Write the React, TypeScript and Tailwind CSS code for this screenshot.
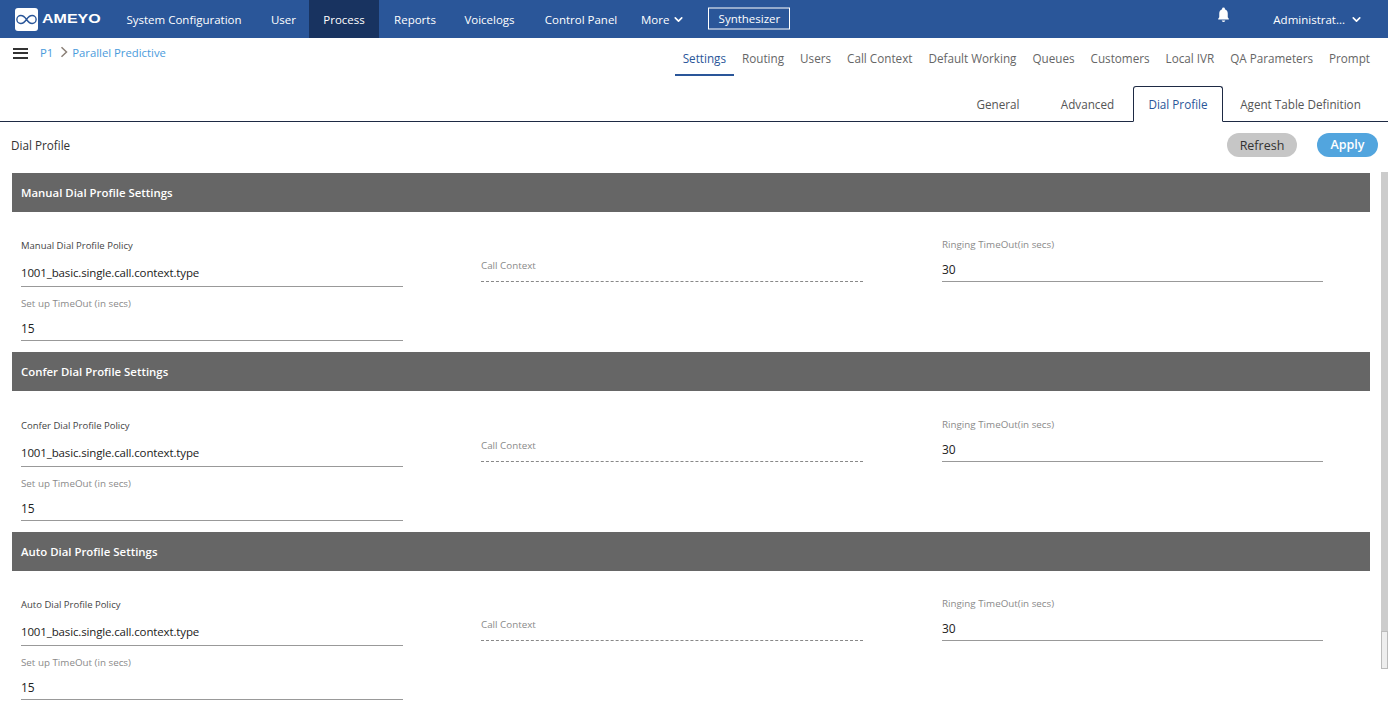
import { ChevronDown } from "lucide-react";

const mainNav = [
  { label: "System Configuration", w: "w-[148px]" },
  { label: "User", w: "w-[51px]" },
  { label: "Process", w: "w-[70px]", active: true },
  { label: "Reports", w: "w-[72px]" },
  { label: "Voicelogs", w: "w-[77px]" },
  { label: "Control Panel", w: "w-[106px]" },
];

const subNav = ["Settings", "Routing", "Users", "Call Context", "Default Working", "Queues", "Customers", "Local IVR", "QA Parameters", "Prompt"];

const sections = [
  { title: "Manual Dial Profile Settings", policy: "Manual Dial Profile Policy", top: "pt-[27px]" },
  { title: "Confer Dial Profile Settings", policy: "Confer Dial Profile Policy", top: "pt-[28px]" },
  { title: "Auto Dial Profile Settings", policy: "Auto Dial Profile Policy", top: "pt-[27px]" },
];

function Logo() {
  return (
    <div className="flex items-center gap-[4px]">
      <div className="flex h-[23px] w-[23px] items-center justify-center rounded-[3px] bg-white">
        <svg viewBox="0 0 24 12" className="h-[11px] w-[21px]" fill="none" stroke="#2a5699" strokeWidth="1.6">
          <path d="M12 6C10 3 8 1.5 5.5 1.5a4.5 4.5 0 0 0 0 9C8 10.5 10 9 12 6c2-3 4-4.5 6.5-4.5a4.5 4.5 0 0 1 0 9C16 10.5 14 9 12 6z" />
        </svg>
      </div>
      <span className="origin-left scale-x-[1.28] text-[12.5px] font-bold text-white [font-family:'Liberation_Sans',sans-serif]">AMEYO</span>
    </div>
  );
}

function Section({ title, policy, top }: { title: string; policy: string; top: string }) {
  return (
    <section className="pb-[11px]">
      <div className="flex h-[39px] w-[1358px] items-center bg-[#666] pl-[9px] pt-[1px] text-[11.4px] font-semibold text-white">{title}</div>
      <div className={`flex pl-[9px] ${top}`}>
        <div className="w-[460px]">
          <div className="text-[9.5px] leading-[14px] text-[#444]">{policy}</div>
          <div className="mt-[8px] h-[26px] w-[382px] border-b border-[#999] text-[11.5px] leading-[24px] tracking-[-0.14px] text-[#222]">
            1001_basic.single.call.context.type
          </div>
          <div className="mt-[10px] text-[9.8px] leading-[14px] text-[#8a8a8a]">Set up TimeOut (in secs)</div>
          <div className="mt-[8px] h-[22px] w-[382px] border-b border-[#999] text-[12px] leading-[20px] text-[#222]">15</div>
        </div>
        <div className="w-[461px] pt-[20px]">
          <div className="text-[9.8px] leading-[14px] text-[#8a8a8a]">Call Context</div>
          <div className="mt-[8px] w-[382px] border-b border-dashed border-[#888]" />
        </div>
        <div className="-mt-[1px]">
          <div className="text-[9.8px] leading-[14px] text-[#8a8a8a]">Ringing TimeOut(in secs)</div>
          <div className="mt-[8px] h-[22px] w-[381px] border-b border-[#999] text-[12px] leading-[20px] text-[#222]">30</div>
        </div>
      </div>
    </section>
  );
}

export default function App() {
  return (
    <div className="h-[710px] w-[1388px] overflow-hidden bg-white [font-family:'Open_Sans',sans-serif]">
      <header className="flex h-[38px] items-center bg-[#2a5699] pl-[15px] pr-[25px] text-[11.5px] text-white">
        <div className="w-[95px]">
          <Logo />
        </div>
        <nav className="flex h-full">
          {mainNav.map((item) => (
            <div key={item.label} className={`flex items-center justify-center pt-[1px] ${item.w} ${item.active ? "bg-[#183360]" : ""}`}>
              {item.label}
            </div>
          ))}
        </nav>
        <div className="ml-[7px] flex items-center gap-[3px] pt-[1px]">
          More <ChevronDown size={13} strokeWidth={3} />
        </div>
        <div className="ml-[23px] flex h-[22px] w-[82px] -translate-y-[0.5px] items-center justify-center border border-white">Synthesizer</div>
        <svg viewBox="0 0 24 24" className="ml-auto h-[17px] w-[17px] -translate-y-[5px]" fill="white">
          <path d="M12 2a2 2 0 0 0-2 2v.6C7.5 5.5 6 7.8 6 10.5V16l-1.5 2v1h15v-1L18 16v-5.5c0-2.7-1.5-5-4-5.9V4a2 2 0 0 0-2-2z" />
          <path d="M9.5 20.5h5a2.5 2 0 0 1-5 0z" />
        </svg>
        <div className="ml-[41px] flex items-center gap-[5px] pt-[1px]">
          Administrat... <ChevronDown size={13} strokeWidth={3} />
        </div>
      </header>

      <div className="h-[84px] border-b border-[#1e2a44]">
        <div className="flex items-start justify-between">
          <div className="flex items-center pl-[13px] pt-[7px] text-[11.3px] text-[#4a9bdc]">
            <div className="flex w-[15px] flex-col gap-[2.5px]">
              <span className="h-[2px] bg-[#333]" />
              <span className="h-[2px] bg-[#333]" />
              <span className="h-[2px] bg-[#333]" />
            </div>
            <span className="ml-[12px]">P1</span>
            <svg viewBox="0 0 8 12" className="ml-[7px] mr-[4px] h-[12px] w-[8px] -translate-y-[1px]" fill="none" stroke="#8a7f76" strokeWidth="1.5">
              <path d="M1.5 1.2 6.5 6l-5 4.8" />
            </svg>
            <span>Parallel Predictive</span>
          </div>
          <nav className="mr-[10px] flex h-[38px] text-[11.7px] text-[#666]">
            {subNav.map((item, i) => (
              <div key={item} className={`flex h-full items-center px-[8px] ${i === 0 ? "border-b-[2px] border-[#2a5699] pt-[6px] text-[#2a5699]" : "pt-[4px]"}`}>
                {item}
              </div>
            ))}
          </nav>
        </div>
        <div className="mt-[10px] flex h-[36px] items-center justify-end pr-[10px] text-[11.7px] text-[#555]">
          <div className="flex h-full w-[88px] items-center justify-center pt-[2px]">General</div>
          <div className="flex h-full w-[91px] items-center justify-center pt-[2px]">Advanced</div>
          <div className="flex h-[36px] w-[90px] items-center justify-center rounded-t-[3px] border border-[#1e2a44] border-b-white bg-white pt-[2px] text-[#2a5699]">
            Dial Profile
          </div>
          <div className="flex h-full w-[155px] items-center justify-center pt-[2px]">Agent Table Definition</div>
        </div>
      </div>

      <div className="flex h-[50px] items-center justify-between pb-[4px] pl-[11px] pr-[10px]">
        <span className="pt-[2px] text-[11.7px] text-[#333]">Dial Profile</span>
        <div className="flex gap-[20px] text-[12.5px]">
          <button className="h-[24px] w-[70px] rounded-full bg-[#c6c6c6] pt-[2px] text-[#333]">Refresh</button>
          <button className="h-[24px] w-[61px] rounded-full bg-[#52a5de] pt-[1px] font-semibold text-white">Apply</button>
        </div>
      </div>

      <div className="flex h-[538px] overflow-hidden">
        <div className="w-[1381px] pl-[12px] pt-[1px]">
          {sections.map((s) => (
            <Section key={s.title} {...s} />
          ))}
        </div>
        <div className="flex h-[497px] w-[7px] flex-col justify-end bg-[#ccc]">
          <div className="h-[38px] border border-[#bbb] bg-[#eee]" />
        </div>
      </div>
    </div>
  );
}
